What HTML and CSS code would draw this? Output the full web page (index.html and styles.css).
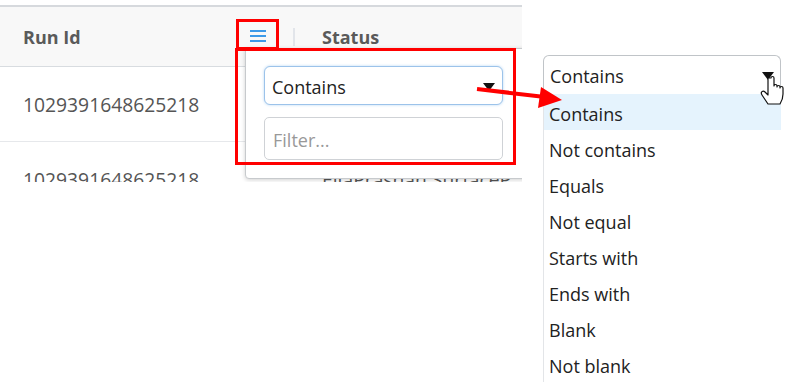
FILE: index.html
```html
<!DOCTYPE html>
<html>
<head>
  <link rel="stylesheet" href="styles.css">
</head>
<body>
  <div class="page">
    <div class="grid">
      <div class="grid-header">
        <div class="hcell run-col">Run Id</div>
        <div class="menu-btn">
          <span class="bar"></span>
          <span class="bar"></span>
          <span class="bar"></span>
        </div>
        <div class="sep"></div>
        <div class="hcell status-col">Status</div>
      </div>
      <div class="grid-row">
        <div class="cell run-col">1029391648625218</div>
      </div>
      <div class="grid-row">
        <div class="cell run-col">1029391648625218</div>
        <div class="cell status-col">EllaPrashah SurfaceP</div>
      </div>

      <div class="filter-popup">
        <div class="select focused">
          <span>Contains</span>
          <span class="caret"></span>
        </div>
        <div class="text-input">Filter...</div>
      </div>
    </div>

    <div class="picker">
      <div class="select open">
        <span>Contains</span>
        <span class="caret"></span>
      </div>
      <ul class="options">
        <li class="active">Contains</li>
        <li>Not contains</li>
        <li>Equals</li>
        <li>Not equal</li>
        <li>Starts with</li>
        <li>Ends with</li>
        <li>Blank</li>
        <li>Not blank</li>
      </ul>
    </div>

    <!-- annotations drawn over the screenshot -->
    <div class="mark mark-menu"></div>
    <div class="mark mark-popup"></div>
    <svg class="overlay" width="791" height="385" viewBox="0 0 791 385">
      <line x1="477" y1="89" x2="545" y2="97" stroke="#f00" stroke-width="4" />
      <polygon points="562,100 541,87 538,108" fill="#f00" />
      <path d="M768 78 v17 l-3 -3 c-2 -2 -5 0 -3 3 l6 9 h12 c2 -3 3 -6 3 -10 v-6 c0 -2 -3 -2 -3 0 v-1 c0 -2 -3 -2 -3 0 v-1 c0 -2 -3 -2 -3 0 v-8 c0 -2 -3 -2 -3 0 z"
            fill="#fff" stroke="#111" stroke-width="1.2" stroke-linejoin="round" />
    </svg>
  </div>
</body>
</html>
```

FILE: styles.css
```css
body {
  margin: 0;
  font-family: 'Open Sans', sans-serif;
  background: #fff;
}

.page {
  position: relative;
  width: 791px;
  height: 385px;
  display: flex;
  align-items: flex-start;
  overflow: hidden;
}

/* grid screenshot */
.grid {
  position: relative;
  width: 522px;
  height: 177px;
  margin-top: 5px;
  overflow: hidden;
  border-top: 2px solid #d6d9dd;
  box-sizing: border-box;
}

.grid-header {
  display: flex;
  align-items: center;
  height: 60px;
  padding-top: 1px;
  box-sizing: border-box;
  background: #f8f8f8;
  border-bottom: 1px solid #d8dce0;
  color: #5a5a5a;
  font-weight: 700;
  font-size: 18px;
}

.run-col {
  width: 214px;
  padding-left: 23px;
  flex-shrink: 0;
}

.menu-btn {
  width: 41px;
  height: 28px;
  display: flex;
  flex-direction: column;
  align-items: center;
  justify-content: center;
  gap: 3px;
  margin-top: -3px;
}

.menu-btn .bar {
  width: 16px;
  height: 2px;
  background: #3d9ae8;
}

.sep {
  width: 2px;
  height: 18px;
  background: #e2e5ea;
  margin-left: 15px;
  margin-right: 27px;
}

.grid-row {
  display: flex;
  align-items: center;
  height: 74px;
  border-bottom: 1px solid #e6e8eb;
  color: #555;
  font-size: 19.3px;
}

.grid-row .status-col {
  margin-left: 85px;
}

/* column filter popup */
.filter-popup {
  position: absolute;
  left: 245px;
  top: 41px;
  width: 300px;
  height: 131px;
  box-sizing: border-box;
  padding: 17px 0 0 18px;
  background: #fff;
  border: 1px solid #c7cacd;
  border-bottom-left-radius: 4px;
  box-shadow: 0 1px 4px rgba(0, 0, 0, 0.18);
  display: flex;
  flex-direction: column;
  gap: 12px;
}

.select {
  display: flex;
  align-items: center;
  justify-content: space-between;
  box-sizing: border-box;
  height: 39px;
  background: #fff;
  color: #222;
  font-size: 18px;
}

.select.focused {
  width: 239px;
  padding: 3px 7px 0 7px;
  border: 1px solid #9cc3ea;
  border-radius: 6px;
  box-shadow: 0 0 3px #b8d6f3;
}

.caret {
  width: 0;
  height: 0;
  border-left: 6px solid transparent;
  border-right: 6px solid transparent;
  border-top: 8px solid #111;
}

.text-input {
  width: 239px;
  height: 43px;
  box-sizing: border-box;
  padding: 2px 0 0 8px;
  display: flex;
  align-items: center;
  border: 1px solid #cfd2d6;
  border-radius: 5px;
  color: #999;
  font-size: 18px;
}

/* enlarged dropdown */
.picker {
  width: 238px;
  margin-left: 21px;
  margin-top: 55px;
}

.select.open {
  padding: 1px 6px 0 6px;
  border: 1px solid #c0c4c8;
  border-bottom: none;
  border-radius: 6px 6px 0 0;
}

.options {
  list-style: none;
  margin: 0;
  padding: 0;
  border-left: 1px solid #e3e5e8;
}

.options li {
  height: 36px;
  box-sizing: border-box;
  padding: 5px 0 0 5px;
  line-height: 31px;
  color: #222;
  font-size: 18px;
}

.options li.active {
  background: #e5f3fd;
}

/* red annotations */
.mark {
  position: absolute;
  border: 3px solid #f00;
  box-sizing: border-box;
}

.mark-menu {
  left: 236px;
  top: 19px;
  width: 43px;
  height: 31px;
}

.mark-popup {
  left: 235px;
  top: 48px;
  width: 281px;
  height: 117px;
}

.overlay {
  position: absolute;
  left: 0;
  top: 0;
  pointer-events: none;
}
```
